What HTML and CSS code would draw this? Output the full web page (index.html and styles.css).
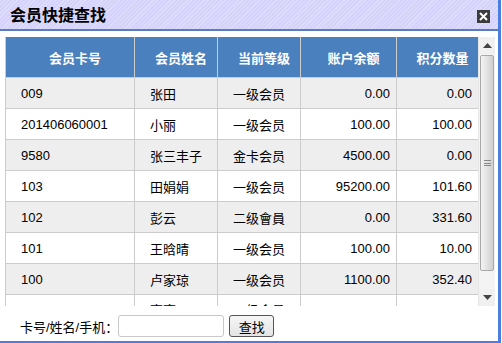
FILE: index.html
```html
<!DOCTYPE html>
<html>
<head>
    <meta charset="utf-8">
    <title>会员快捷查找</title>
    <link rel="stylesheet" href="styles.css">
</head>
<body>
    <div class="dialog">
        <div class="title-bar">
            <span class="title">会员快捷查找</span>
            <span class="close-btn">
                <svg width="13" height="13" viewBox="0 0 13 13">
                    <rect width="13" height="13" fill="#3c3c3c"/>
                    <path d="M3 3 L10 10 M10 3 L3 10" stroke="#fff" stroke-width="2"/>
                </svg>
            </span>
        </div>

        <div class="grid-area">
            <div class="grid-wrap">
                <table class="grid">
                    <colgroup>
                        <col style="width: 129px">
                        <col style="width: 83px">
                        <col style="width: 83px">
                        <col style="width: 96px">
                        <col style="width: 82px">
                    </colgroup>
                    <thead>
                        <tr>
                            <th>会员卡号</th>
                            <th>会员姓名</th>
                            <th>当前等级</th>
                            <th>账户余额</th>
                            <th>积分数量</th>
                        </tr>
                    </thead>
                    <tbody>
                        <tr class="odd"><td>009</td><td>张田</td><td>一级会员</td><td class="num">0.00</td><td class="num">0.00</td></tr>
                        <tr><td>201406060001</td><td>小丽</td><td>一级会员</td><td class="num">100.00</td><td class="num">100.00</td></tr>
                        <tr class="odd"><td>9580</td><td>张三丰子</td><td>金卡会员</td><td class="num">4500.00</td><td class="num">0.00</td></tr>
                        <tr><td>103</td><td>田娟娟</td><td>一级会员</td><td class="num">95200.00</td><td class="num">101.60</td></tr>
                        <tr class="odd"><td>102</td><td>彭云</td><td>二级會員</td><td class="num">0.00</td><td class="num">331.60</td></tr>
                        <tr><td>101</td><td>王晗晴</td><td>一级会员</td><td class="num">100.00</td><td class="num">10.00</td></tr>
                        <tr class="odd"><td>100</td><td>卢家琼</td><td>一级会员</td><td class="num">1100.00</td><td class="num">352.40</td></tr>
                        <tr class="last"><td></td><td>高畜</td><td>一级会员</td><td class="num"></td><td class="num"></td></tr>
                    </tbody>
                </table>
            </div>
            <div class="scrollbar">
                <div class="sb-btn">
                    <svg width="9" height="5" viewBox="0 0 9 5"><path d="M0 5 L4.5 0 L9 5 Z" fill="#444"/></svg>
                </div>
                <div class="sb-thumb">
                    <span class="grip"></span>
                </div>
                <div class="sb-track"></div>
                <div class="sb-btn">
                    <svg width="9" height="5" viewBox="0 0 9 5"><path d="M0 0 L9 0 L4.5 5 Z" fill="#444"/></svg>
                </div>
            </div>
        </div>

        <div class="search-bar">
            <label for="keyword">卡号/姓名/手机：</label>
            <input type="text" id="keyword" class="search-input">
            <button class="search-btn">查找</button>
        </div>
    </div>
</body>
</html>
```

FILE: styles.css
```css
body {
    margin: 0;
    font-family: 'Liberation Sans', 'Noto Sans CJK SC', sans-serif;
    font-size: 13px;
    background: #fff;
}
.dialog {
    width: 501px;
    height: 343px;
    box-sizing: border-box;
    border-right: 3px solid #4a7fe0;
    border-bottom: 2px solid #4a7fe0;
    display: flex;
    flex-direction: column;
    overflow: hidden;
}
.title-bar {
    height: 29px;
    flex-shrink: 0;
    border-bottom: 2px solid #5a7dbd;
    background-color: #d5d3fc;
    background-image: repeating-linear-gradient(135deg, rgba(255,255,255,0.25) 0 1px, transparent 1px 3px);
    display: flex;
    align-items: center;
    justify-content: space-between;
    padding: 0 8px 0 10px;
}
.title {
    font-size: 16px;
    font-weight: bold;
    color: #000;
    margin-top: -1px;
}
.close-btn {
    display: flex;
    margin-top: 3px;
}
.grid-area {
    display: flex;
    margin: 6px 0 0 5px;
    height: 269px;
    flex-shrink: 0;
}
.grid-wrap {
    width: 473px;
    height: 269px;
    overflow: hidden;
}
.grid {
    border-collapse: collapse;
    table-layout: fixed;
    width: 473px;
}
.grid th {
    height: 40px;
    background: #4a80bd;
    color: #fff;
    font-weight: bold;
    text-align: center;
    border: 1px solid #cccccc;
    border-top: none;
    padding: 0 0 0 10px;
}
.grid td {
    height: 30px;
    border: 1px solid #cccccc;
    padding: 0 6px 0 15px;
    color: #000;
    white-space: nowrap;
}
.grid tr.odd td {
    background: #eeeeee;
}
.grid tr.last td {
    vertical-align: top;
    padding-top: 5px;
}
.grid td.num {
    text-align: right;
}
.scrollbar {
    width: 17px;
    height: 269px;
    background: #f4f4f4;
    border-left: 1px solid #e6e6e6;
    box-sizing: border-box;
    display: flex;
    flex-direction: column;
}
.sb-btn {
    height: 17px;
    display: flex;
    align-items: center;
    justify-content: center;
    background: #f0f0f0;
}
.sb-thumb {
    height: 216px;
    margin: 1px 1px 0 1px;
    border: 1px solid #a8a8a8;
    border-radius: 2px;
    background: linear-gradient(to right, #f4f4f4, #e2e2e2 50%, #cfcfcf);
    display: flex;
    align-items: center;
    justify-content: center;
    box-sizing: border-box;
}
.grip {
    width: 7px;
    height: 6px;
    border-top: 1px solid #888;
    border-bottom: 1px solid #888;
    box-sizing: border-box;
    background: linear-gradient(#888, #888) center / 100% 1px no-repeat;
}
.sb-track {
    flex: 1;
}
.search-bar {
    flex: 1;
    display: flex;
    align-items: center;
    padding: 5px 0 0 20px;
}
.search-bar label {
    color: #000;
}
.search-input {
    width: 106px;
    height: 22px;
    box-sizing: border-box;
    border: 1px solid #c8c8c8;
    border-radius: 3px;
    margin-left: 0;
    padding: 0 3px;
}
.search-btn {
    width: 45px;
    height: 22px;
    margin-left: 5px;
    padding: 0;
    font-family: 'Noto Sans CJK SC', sans-serif;
    font-size: 13px;
    background: linear-gradient(#f6f6f6, #e4e4e4);
    border: 1px solid #555;
    border-radius: 3px;
    color: #000;
}
```
